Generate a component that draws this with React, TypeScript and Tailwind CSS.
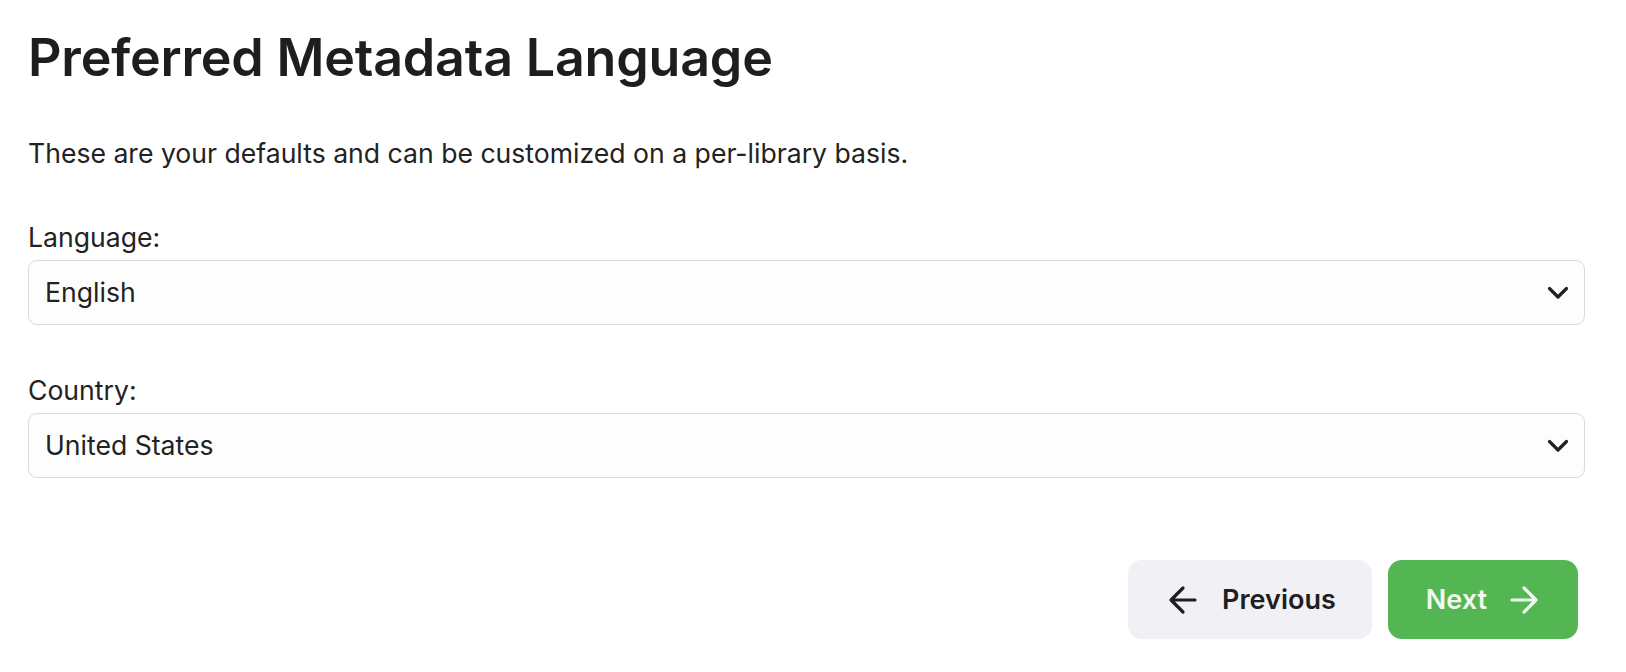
import { ReactNode } from "react"

const Chevron = () => (
  <svg width="22" height="14" viewBox="0 0 22 14" fill="none" className="shrink-0">
    <polyline
      points="2.5,2.5 11,11 19.5,2.5"
      stroke="#222"
      strokeWidth="3.2"
      strokeLinecap="round"
      strokeLinejoin="round"
    />
  </svg>
)

const Arrow = ({ dir }: { dir: "left" | "right" }) => (
  <svg width="30" height="30" viewBox="0 0 30 30" fill="none" className="shrink-0">
    {dir === "left" ? (
      <path d="M27 15H3M15 3L3 15L15 27" stroke="currentColor" strokeWidth="3.2" strokeLinecap="round" strokeLinejoin="round" />
    ) : (
      <path d="M3 15H27M15 3L27 15L15 27" stroke="currentColor" strokeWidth="3.2" strokeLinecap="round" strokeLinejoin="round" />
    )}
  </svg>
)

const Field = ({ label, value }: { label: string; value: string }) => (
  <div className="flex flex-col">
    <label className="text-[26.6px] leading-[39px] text-[#222]">{label}</label>
    <div className="mt-[3px] flex h-[65px] items-center justify-between rounded-[9px] border border-[#dadada] bg-[#fdfdfd] pl-[16px] pr-[15px]">
      <span className="text-[26.6px] text-[#222]">{value}</span>
      <Chevron />
    </div>
  </div>
)

const Button = ({ children, primary }: { children: ReactNode; primary?: boolean }) => (
  <button
    className={
      primary
        ? "flex h-[79px] items-center gap-[22px] rounded-[14px] bg-[#53b653] pl-[38px] pr-[39px] text-[27px] font-semibold text-[#f1f9ef]"
        : "flex h-[79px] items-center gap-[24px] rounded-[14px] bg-[#f0f0f5] pl-[40px] pr-[36px] text-[27px] font-semibold text-[#1e1e24]"
    }
  >
    {children}
  </button>
)

export default function App() {
  return (
    <div className="min-h-screen bg-white pl-[28px] pr-[41px] pt-[27px] font-['Inter',sans-serif]">
      <h1 className="text-[52px] font-semibold leading-[1.2] tracking-[-0.2px] text-[#1e1e1e]">
        Preferred Metadata Language
      </h1>
      <p className="mt-[45px] text-[26.6px] leading-[39px] text-[#222]">
        These are your defaults and can be customized on a per-library basis.
      </p>
      <div className="mt-[45px] flex flex-col gap-[46px]">
        <Field label="Language:" value="English" />
        <Field label="Country:" value="United States" />
      </div>
      <div className="mt-[82px] flex justify-end gap-[16px] pr-[7px]">
        <Button>
          <Arrow dir="left" />
          Previous
        </Button>
        <Button primary>
          Next
          <Arrow dir="right" />
        </Button>
      </div>
    </div>
  )
}
